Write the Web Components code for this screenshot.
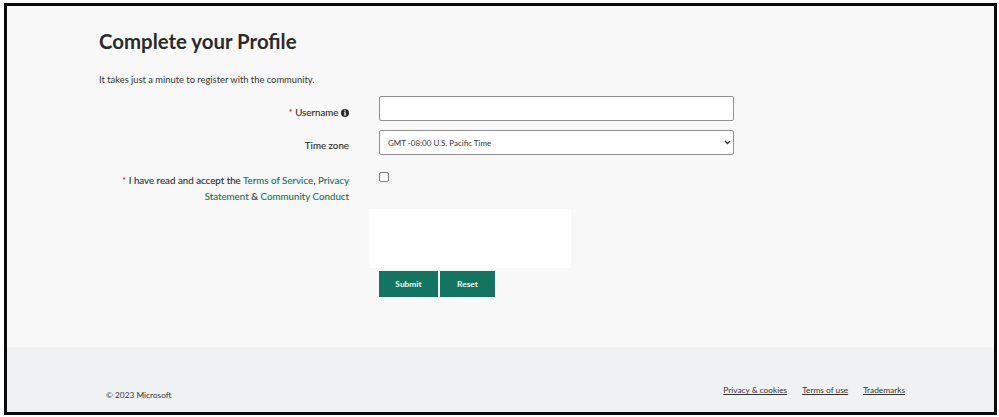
<!DOCTYPE html>
<html>
<head>
<meta charset="utf-8">
<title>Complete your Profile</title>
<style>
  html, body { margin: 0; height: 100%; background: #fff; }
  body { font-family: Lato, "Open Sans", sans-serif; color: #2b2b2b; }
</style>
</head>
<body>
<profile-page>
  <profile-form></profile-form>
  <site-footer slot="footer"></site-footer>
</profile-page>

<script>
class ProfilePage extends HTMLElement {
  constructor() {
    super();
    this.attachShadow({ mode: "open" });
    this.shadowRoot.innerHTML = `
      <style>
        :host {
          display: flex;
          flex-direction: column;
          box-sizing: border-box;
          width: 993px;
          height: 412px;
          margin: 3px 0 0 4px;
          border: 3px solid #0a0a0a;
          background: #f8f8f8;
          overflow: hidden;
        }
        main { flex: 1; min-height: 0; }
      </style>
      <main><slot></slot></main>
      <slot name="footer"></slot>
    `;
  }
}

class ProfileForm extends HTMLElement {
  constructor() {
    super();
    this.attachShadow({ mode: "open" });
    this.shadowRoot.innerHTML = `
      <style>
        :host { display: block; padding: 21px 0 0 92px; }
        h1 {
          margin: 0;
          font-size: 20.4px;
          line-height: 28px;
          font-weight: 700;
          color: #2a2a2a;
        }
        p {
          margin: 18px 0 0;
          font-size: 9.35px;
          line-height: 14px;
          color: #333;
        }
        .rows {
          display: grid;
          grid-template-columns: 250px 355px;
          column-gap: 30px;
          margin-top: 9px;
          font-size: 9.75px;
          color: #2b2b2b;
        }
        label {
          text-align: right;
          line-height: 16px;
          white-space: nowrap;
          -webkit-text-stroke: 0.1px #2b2b2b;
        }
        .row-user { padding-top: 8px; }
        .row-zone { padding-top: 7px; margin-top: 9px; }
        .row-terms { margin-top: 15px; padding-top: 2px; }
        .field { box-sizing: border-box; height: 25px; position: relative; }
        .field-zone { margin-top: 9px; }
        .field-check { margin-top: 15px; height: auto; }
        .req { color: #b3262c; -webkit-text-stroke: 0; }
        a { color: #1a6e5a; text-decoration: none; -webkit-text-stroke: 0.1px #1a6e5a; }
        input[type=text], select {
          box-sizing: border-box;
          width: 100%;
          height: 25px;
          margin: 0;
          border: 1px solid #8f8f8f;
          border-radius: 2px;
          background: #fff;
          font: 8px Lato, sans-serif;
          color: #333;
        }
        select { padding-left: 8px; appearance: none; -webkit-appearance: none; }
        .chev { position: absolute; right: 3px; top: 10px; pointer-events: none; }
        input[type=checkbox] {
          display: block;
          appearance: none;
          -webkit-appearance: none;
          box-sizing: border-box;
          width: 10px;
          height: 10px;
          margin: 2px 0 0 0;
          border: 1px solid #7a7a7a;
          border-radius: 2px;
          background: #fff;
        }
        .captcha {
          width: 202px;
          height: 59px;
          margin: 5px 0 0 -10px;
          background: #fff;
        }
        .actions { display: flex; gap: 2px; margin-top: 3px; }
      </style>
      <h1>Complete your Profile</h1>
      <p>It takes just a minute to register with the community.</p>
      <div class="rows">
        <label class="row-user"><span class="req">*</span> Username <i-badge></i-badge></label>
        <div class="field"><input type="text" aria-label="Username"></div>

        <label class="row-zone">Time zone</label>
        <div class="field field-zone">
          <select aria-label="Time zone"><option>GMT -08:00 U.S. Pacific Time</option></select>
          <svg class="chev" width="7" height="5" viewBox="0 0 7 5"><path d="M1 1L3.5 3.5L6 1" fill="none" stroke="#333" stroke-width="1.3"/></svg>
        </div>

        <label class="row-terms"><span class="req">*</span> I have read and accept the <a href="#">Terms of Service</a>, <a href="#">Privacy</a><br><a href="#">Statement</a> &amp; <a href="#">Community Conduct</a></label>
        <div class="field field-check"><input type="checkbox" aria-label="Accept"></div>

        <div></div>
        <div>
          <div class="captcha"></div>
          <div class="actions">
            <green-button style="width:59px">Submit</green-button>
            <green-button style="width:55px">Reset</green-button>
          </div>
        </div>
      </div>
    `;
  }
}

// small round "i" next to the username label
class IBadge extends HTMLElement {
  constructor() {
    super();
    this.attachShadow({ mode: "open" });
    this.shadowRoot.innerHTML = `
      <style>
        :host { display: inline-block; width: 8px; height: 8px; vertical-align: -0.5px; }
        svg { display: block; }
      </style>
      <svg width="8" height="8" viewBox="0 0 8 8">
        <circle cx="4" cy="4" r="4" fill="#2b2b2b"/>
        <rect x="3.3" y="1.2" width="1.4" height="1.3" fill="#f8f8f8"/>
        <path d="M2.9 3.2H4.7V5.7H5.2V6.6H2.9V5.7H3.4V4H2.9Z" fill="#f8f8f8"/>
      </svg>
    `;
  }
}

class GreenButton extends HTMLElement {
  constructor() {
    super();
    this.attachShadow({ mode: "open" });
    this.shadowRoot.innerHTML = `
      <style>
        :host { display: block; }
        button {
          display: block;
          width: 100%;
          height: 26px;
          padding: 0;
          border: 0;
          background: #127560;
          color: #f2f7f5;
          font: 700 8.4px Lato, sans-serif;
        }
      </style>
      <button><slot></slot></button>
    `;
  }
}

class SiteFooter extends HTMLElement {
  constructor() {
    super();
    this.attachShadow({ mode: "open" });
    this.shadowRoot.innerHTML = `
      <style>
        :host {
          display: flex;
          justify-content: space-between;
          box-sizing: border-box;
          height: 65px;
          padding: 37px 89px 0 99px;
          background: #f0f1f3;
          font-size: 8.3px;
          line-height: 12px;
          color: #333;
        }
        .copy { padding-top: 5px; }
        nav { display: flex; gap: 15px; }
        a { color: #333; }
      </style>
      <div class="copy">© 2023 Microsoft</div>
      <nav>
        <a href="#">Privacy &amp; cookies</a>
        <a href="#">Terms of use</a>
        <a href="#">Trademarks</a>
      </nav>
    `;
  }
}

customElements.define("profile-page", ProfilePage);
customElements.define("profile-form", ProfileForm);
customElements.define("i-badge", IBadge);
customElements.define("green-button", GreenButton);
customElements.define("site-footer", SiteFooter);
</script>
</body>
</html>
